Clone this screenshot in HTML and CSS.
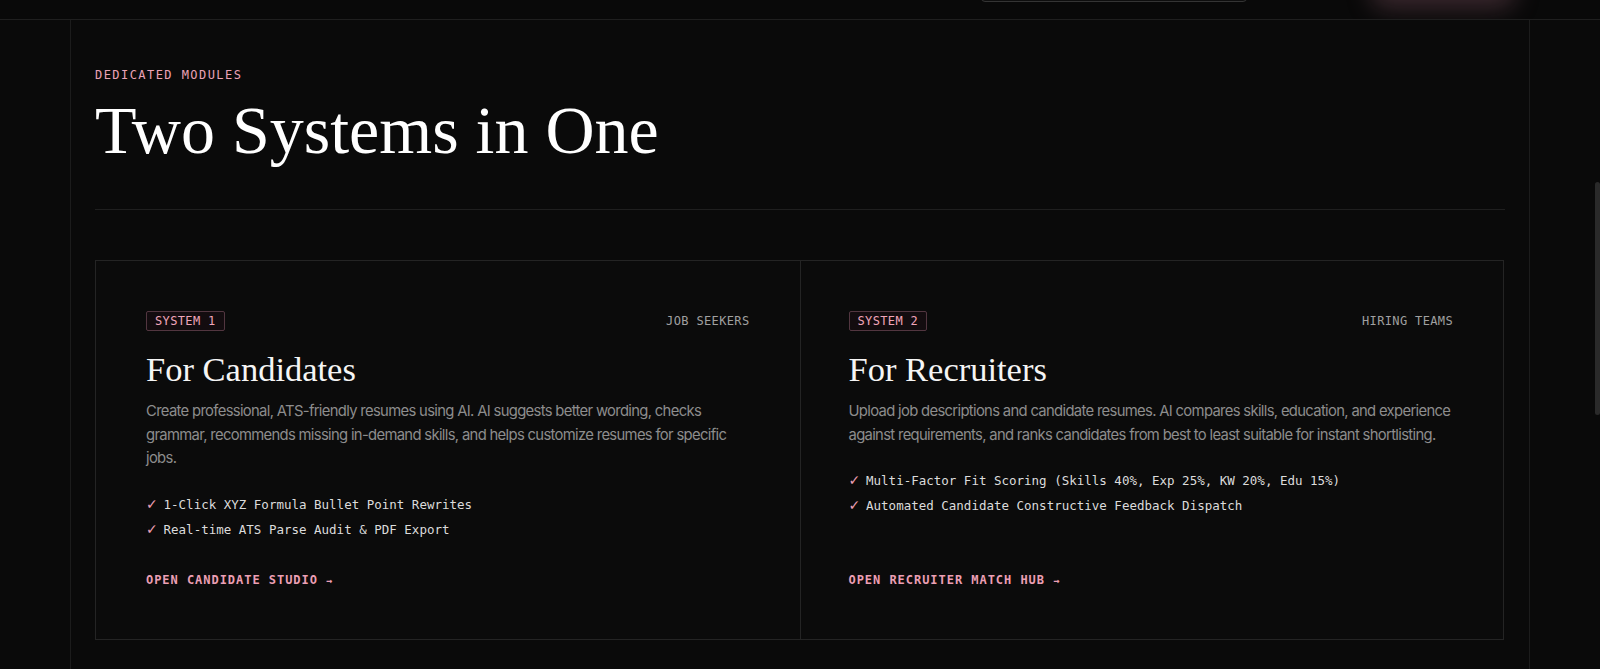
FILE: index.html
```html
<!DOCTYPE html>
<html lang="en">
<head>
    <meta charset="UTF-8">
    <meta name="viewport" content="width=device-width, initial-scale=1.0">
    <title>Two Systems in One</title>
    <link rel="stylesheet" href="styles.css">
</head>
<body>

<header class="topbar">
    <div class="search-box"></div>
    <div class="cta-glow"></div>
</header>

<div class="container">
    <section class="modules">
        <p class="eyebrow">DEDICATED MODULES</p>
        <h1>Two Systems in One</h1>
        <hr class="divider">

        <div class="systems">
            <div class="system-card">
                <div class="card-head">
                    <span class="badge">SYSTEM 1</span>
                    <span class="audience">JOB SEEKERS</span>
                </div>
                <h2>For Candidates</h2>
                <p class="desc">Create professional, ATS-friendly resumes using AI. AI suggests better wording, checks grammar, recommends missing in-demand skills, and helps customize resumes for specific jobs.</p>
                <ul class="features">
                    <li><span class="check">✓</span> 1-Click XYZ Formula Bullet Point Rewrites</li>
                    <li><span class="check">✓</span> Real-time ATS Parse Audit &amp; PDF Export</li>
                </ul>
                <a class="open-link" href="#">OPEN CANDIDATE STUDIO <span class="arrow">→</span></a>
            </div>

            <div class="system-card">
                <div class="card-head">
                    <span class="badge">SYSTEM 2</span>
                    <span class="audience">HIRING TEAMS</span>
                </div>
                <h2>For Recruiters</h2>
                <p class="desc">Upload job descriptions and candidate resumes. AI compares skills, education, and experience against requirements, and ranks candidates from best to least suitable for instant shortlisting.</p>
                <ul class="features">
                    <li><span class="check">✓</span> Multi-Factor Fit Scoring (Skills 40%, Exp 25%, KW 20%, Edu 15%)</li>
                    <li><span class="check">✓</span> Automated Candidate Constructive Feedback Dispatch</li>
                </ul>
                <a class="open-link" href="#">OPEN RECRUITER MATCH HUB <span class="arrow">→</span></a>
            </div>
        </div>
    </section>
</div>

<div class="scroll-thumb"></div>

</body>
</html>
```

FILE: styles.css
```css
body {
    margin: 0;
    padding: 0;
    background-color: #0a0a0a;
    color: #f2f2f2;
    font-family: "Inter", "Liberation Sans", sans-serif;
    overflow: hidden;
}
.topbar {
    height: 19px;
    border-bottom: 1px solid #1f1f1f;
    display: flex;
    align-items: flex-end;
    overflow: hidden;
    background-color: #090909;
}
.search-box {
    width: 264px;
    height: 40px;
    margin-left: 981px;
    margin-bottom: 17px;
    border: 1px solid #343434;
    border-radius: 4px;
    background-color: #0e0e0e;
    flex-shrink: 0;
}
.cta-glow {
    width: 124px;
    height: 36px;
    margin-left: 134px;
    margin-bottom: 20px;
    border-radius: 6px;
    background-color: #4a333a;
    box-shadow: 0 0 24px 10px rgba(130, 86, 100, 0.4);
    flex-shrink: 0;
}
.container {
    max-width: 1458px;
    margin: 0 auto;
    border-left: 1px solid #1c1c1c;
    border-right: 1px solid #1c1c1c;
    min-height: 650px;
}
.modules {
    padding: 47px 24px 0;
}
.eyebrow {
    margin: 0;
    font-family: "DejaVu Sans Mono", "Liberation Mono", monospace;
    font-size: 12px;
    line-height: 16px;
    letter-spacing: 0.12em;
    color: #eaa2b6;
}
h1 {
    margin: 10px 0 0;
    font-family: "Liberation Serif", serif;
    font-weight: 400;
    font-size: 68px;
    line-height: 75px;
    color: #ffffff;
}
.divider {
    margin: 41px 0 0;
    border: none;
    border-top: 1px solid #1f1f1f;
}
.systems {
    margin-top: 50px;
    display: grid;
    grid-template-columns: 1fr 1fr;
    border: 1px solid #242424;
    margin-right: 1px;
}
.system-card {
    padding: 50px;
    display: flex;
    flex-direction: column;
    background-color: #0b0b0b;
}
.system-card + .system-card {
    border-left: 1px solid #242424;
    padding-left: 48px;
}
.card-head {
    display: flex;
    justify-content: space-between;
    align-items: center;
    font-family: "DejaVu Sans Mono", "Liberation Mono", monospace;
    font-size: 12px;
    letter-spacing: 0.03em;
}
.badge {
    padding: 2px 8px;
    line-height: 14px;
    border: 1px solid #523640;
    border-radius: 2px;
    background-color: #130c0f;
    color: #f0a5ba;
}
.audience {
    color: #a0a0a0;
}
h2 {
    margin: 18px 0 0;
    font-family: "Liberation Serif", serif;
    font-weight: 400;
    font-size: 34.5px;
    line-height: 41px;
    color: #f5f5f5;
}
.desc {
    margin: 10px 0 0;
    font-size: 14.8px;
    line-height: 23.5px;
    letter-spacing: -0.045em;
    color: #8d8d8d;
}
.features {
    list-style: none;
    margin: 21px 0 30px;
    padding: 0;
    font-family: "DejaVu Sans Mono", "Liberation Mono", monospace;
    font-size: 12.5px;
    line-height: 25px;
    color: #dcdcdc;
}
.check {
    display: inline-block;
    width: 10px;
    font-family: "DejaVu Sans", sans-serif;
    font-size: 14px;
    color: #ec9fb4;
}
.open-link {
    margin-top: auto;
    font-family: "DejaVu Sans Mono", "Liberation Mono", monospace;
    font-size: 12px;
    font-weight: bold;
    line-height: 16px;
    letter-spacing: 0.08em;
    color: #ec9fb4;
    text-decoration: none;
}
.arrow {
    font-size: 10px;
}
.scroll-thumb {
    position: fixed;
    right: 0;
    top: 182px;
    width: 5px;
    height: 233px;
    border-radius: 3px;
    background-color: #2a2a2a;
}
```
